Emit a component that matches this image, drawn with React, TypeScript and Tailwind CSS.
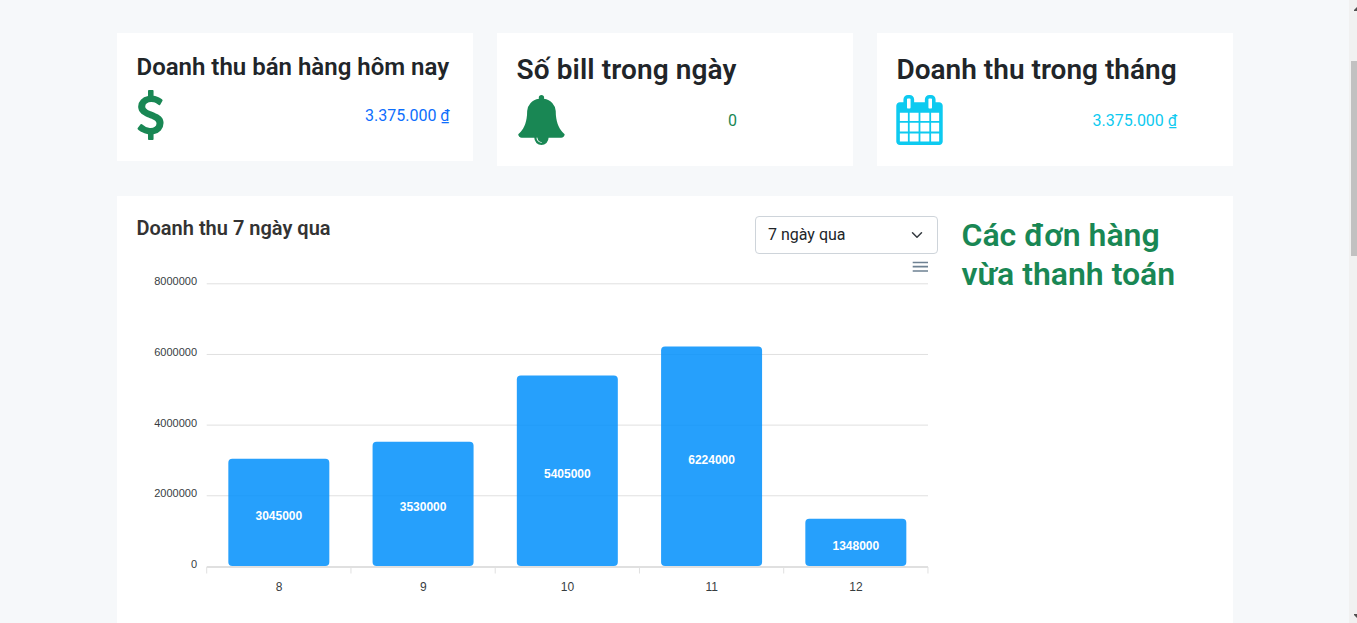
import React from "react";

const DOLLAR =
  "M1362 1185q0 153-99.5 263.5t-258.5 136.5v175q0 14-9 23t-23 9h-135q-13 0-22.5-9.5t-9.5-22.5v-175q-66-9-127.5-31t-101.5-44.5-74-48-46.5-37.5-17.5-18q-17-21-2-41l103-135q7-10 23-12 15-2 24 9l2 2q113 99 243 125 37 8 74 8 81 0 142.5-43t61.5-122q0-28-15-53t-33.5-42-58.5-37.5-66-32-80-32.5q-39-16-61.5-25t-61.5-26.5-62.5-31-56.5-35.5-53.5-42.5-43.5-49-35.5-58-21-66.5-8.5-78q0-138 98-242t255-134v-180q0-13 9.5-22.5t22.5-9.5h135q14 0 23 9t9 23v176q57 6 110.5 23t87 33.5 63.5 37.5 39 29 15 14q17 18 5 38l-81 146q-8 15-23 16-14 3-27-7-3-3-14.5-12t-39-26.5-58.5-32-74.5-26-85.5-11.5q-95 0-155 43t-60 111q0 26 8.5 48t29.5 41.5 39.5 33 56 31 60.5 27 70 27.5q53 20 81 31.5t76 35 75.5 42.5 62 50 53 63.5 31.5 76.5 13 94z";
const BELL =
  "M912 1696q0-16-16-16-59 0-101.5-42.5t-42.5-101.5q0-16-16-16t-16 16q0 73 51.5 124.5t124.5 51.5q16 0 16-16zm816-288q0 52-38 90t-90 38h-448q0 106-75 181t-181 75-181-75-75-181h-448q-52 0-90-38t-38-90q50-42 91-88t85-119.5 74.5-158.5 50-206 19.5-260q0-152 117-282.5t307-158.5q-8-19-8-39 0-40 28-68t68-28 68 28 28 68q0 20-8 39 190 28 307 158.5t117 282.5q0 139 19.5 260t50 206 74.5 158.5 85 119.5 91 88z";
const CALENDAR =
  "M192 1664h288v-288h-288v288zm352 0h320v-288h-320v288zm-352-352h288v-320h-288v320zm352 0h320v-320h-320v320zm-352-384h288v-288h-288v288zm736 736h320v-288h-320v288zm-384-736h320v-288h-320v288zm768 736h288v-288h-288v288zm-384-352h320v-320h-320v320zm-352-864v-288q0-13-9.5-22.5t-22.5-9.5h-64q-13 0-22.5 9.5t-9.5 22.5v288q0 13 9.5 22.5t22.5 9.5h64q13 0 22.5-9.5t9.5-22.5zm736 864h288v-320h-288v320zm-384-384h320v-288h-320v288zm384 0h288v-288h-288v288zm32-480v-288q0-13-9.5-22.5t-22.5-9.5h-64q-13 0-22.5 9.5t-9.5 22.5v288q0 13 9.5 22.5t22.5 9.5h64q13 0 22.5-9.5t9.5-22.5zm384-64v1280q0 52-38 90t-90 38h-1408q-52 0-90-38t-38-90v-1280q0-52 38-90t90-38h128v-96q0-66 47-113t113-47h64q66 0 113 47t47 113v96h384v-96q0-66 47-113t113-47h64q66 0 113 47t47 113v96h128q52 0 90 38t38 90z";

type StatProps = {
  title: string;
  titleClass: string;
  value: string;
  valueClass: string;
  icon: React.ReactNode;
};

function StatCard({ title, titleClass, value, valueClass, icon }: StatProps) {
  return (
    <div className="flex w-[356px] bg-white pt-5 pr-5 pb-[21px] pl-[19.5px]">
      <div className="w-fit">
        <h2 className={`mb-2 font-semibold whitespace-nowrap text-[#212529] ${titleClass}`}>{title}</h2>
        <div className="-mr-[0.5px] -ml-[0.5px] flex h-[50px] items-center justify-between">
          {icon}
          <span className={`pt-0.5 text-base ${valueClass}`}>{value}</span>
        </div>
      </div>
    </div>
  );
}

const bars = [
  { label: "8", value: 3045000 },
  { label: "9", value: 3530000 },
  { label: "10", value: 5405000 },
  { label: "11", value: 6224000 },
  { label: "12", value: 1348000 },
];
const LEFT = 69.7;
const STEP = 144.25;
const BASE = 312.4;
const HEIGHT = 282.6;
const MAX = 8000000;

function RevenueChart() {
  const ticks = [8000000, 6000000, 4000000, 2000000, 0];
  return (
    <svg
      width="801"
      height="350"
      viewBox="0 0 801 350"
      className="block font-['Liberation_Sans',Arial,sans-serif]"
    >
      {ticks.map((t) => {
        const y = BASE - (t / MAX) * HEIGHT;
        return (
          <g key={t}>
            {t > 0 && <line x1={LEFT} x2="791" y1={y} y2={y} stroke="#e0e0e0" />}
            <text x="60" y={y + 1.6} textAnchor="end" fontSize="11" fill="#373d3f">
              {t}
            </text>
          </g>
        );
      })}
      <line x1={LEFT} x2="791" y1="313" y2="313" stroke="#e0e0e0" strokeWidth="2" />
      {[0, 1, 2, 3, 4, 5].map((i) => (
        <line
          key={i}
          x1={LEFT + i * STEP}
          x2={LEFT + i * STEP}
          y1="313"
          y2="319.5"
          stroke="#e0e0e0"
        />
      ))}
      {bars.map((b, i) => {
        const h = (b.value / MAX) * HEIGHT;
        const cx = LEFT + STEP * (i + 0.5);
        return (
          <g key={b.label}>
            <rect x={cx - 50.5} y={BASE - h} width="101" height={h - 0.4} rx="4" fill="#008ffb" fillOpacity="0.85" />
            <text
              x={cx}
              y={BASE - h / 2 + 7.4}
              textAnchor="middle"
              fontSize="12"
              fontWeight="bold"
              fill="#fff"
            >
              {b.value}
            </text>
            <text x={cx + 0.2} y="337" textAnchor="middle" fontSize="12" fill="#373d3f">
              {b.label}
            </text>
          </g>
        );
      })}
      <path d="M775.7 8.5h15.3M775.7 12.7h15.3M775.7 17h15.3" stroke="#6e8192" strokeWidth="1.7" />
    </svg>
  );
}

export default function App() {
  return (
    <div className="flex h-[623px] w-[1357px] overflow-hidden bg-[#f6f8fa] font-['Roboto',sans-serif] text-[#212529]">
      <main className="w-[1349px] shrink-0 pt-[33px] pl-[117px]">
        <div className="flex items-start gap-6">
          <StatCard
            title="Doanh thu bán hàng hôm nay"
            titleClass="text-2xl leading-[29px]"
            value="3.375.000 ₫"
            valueClass="text-[#0d6efd]"
            icon={
              <svg width="28.6" height="50" viewBox="375 0 1024 1792" fill="#198754">
                <path d={DOLLAR} />
              </svg>
            }
          />
          <StatCard
            title="Số bill trong ngày"
            titleClass="text-[28px] leading-[34px] tracking-[0.1px]"
            value="0"
            valueClass="text-[#198754]"
            icon={
              <svg width="50" height="50" viewBox="-16 0 1792 1792" fill="#198754">
                <path d={BELL} />
              </svg>
            }
          />
          <StatCard
            title="Doanh thu trong tháng"
            titleClass="text-[28px] leading-[34px]"
            value="3.375.000 ₫"
            valueClass="text-[#0dcaf0]"
            icon={
              <svg width="47" height="50" viewBox="54 0 1684 1792" fill="#0dcaf0">
                <path d={CALENDAR} />
              </svg>
            }
          />
        </div>
        <section className="mt-[30px] flex h-[440px] w-[1116px] gap-[23.5px] bg-white py-5 pr-5 pl-[19.5px]">
          <div className="w-[801.5px]">
            <div className="flex items-start justify-between">
              <h3 className="text-xl leading-6 font-semibold text-[#333]">Doanh thu 7 ngày qua</h3>
              <div className="flex h-[38px] w-[183px] items-center justify-between rounded border border-[#ced4da] pr-3 pl-3">
                <span className="text-base">7 ngày qua</span>
                <svg
                  width="16"
                  height="12"
                  viewBox="0 0 16 16"
                  fill="none"
                  stroke="#343a40"
                  strokeWidth="2"
                  strokeLinecap="round"
                  strokeLinejoin="round"
                >
                  <path d="m2 5 6 6 6-6" />
                </svg>
              </div>
            </div>
            <div className="flex justify-end">
              <RevenueChart />
            </div>
          </div>
          <h1 className="w-[251px] text-[32px] leading-[39px] font-semibold text-[#198754]">
            Các đơn hàng
            <br />
            vừa thanh toán
          </h1>
        </section>
      </main>
      <div className="flex w-2 shrink-0 flex-col items-end bg-[#f1f1f1]">
        <svg width="3" height="61" viewBox="0 0 3 61">
          <path d="M0 11v-1l3-3v4z" fill="#505050" />
        </svg>
        <div className="h-[195px] w-1.5 bg-[#c1c1c1]" />
        <svg className="mt-auto" width="3" height="12" viewBox="0 0 3 12">
          <path d="M0 3v1l3 3V3z" fill="#505050" />
        </svg>
      </div>
    </div>
  );
}
